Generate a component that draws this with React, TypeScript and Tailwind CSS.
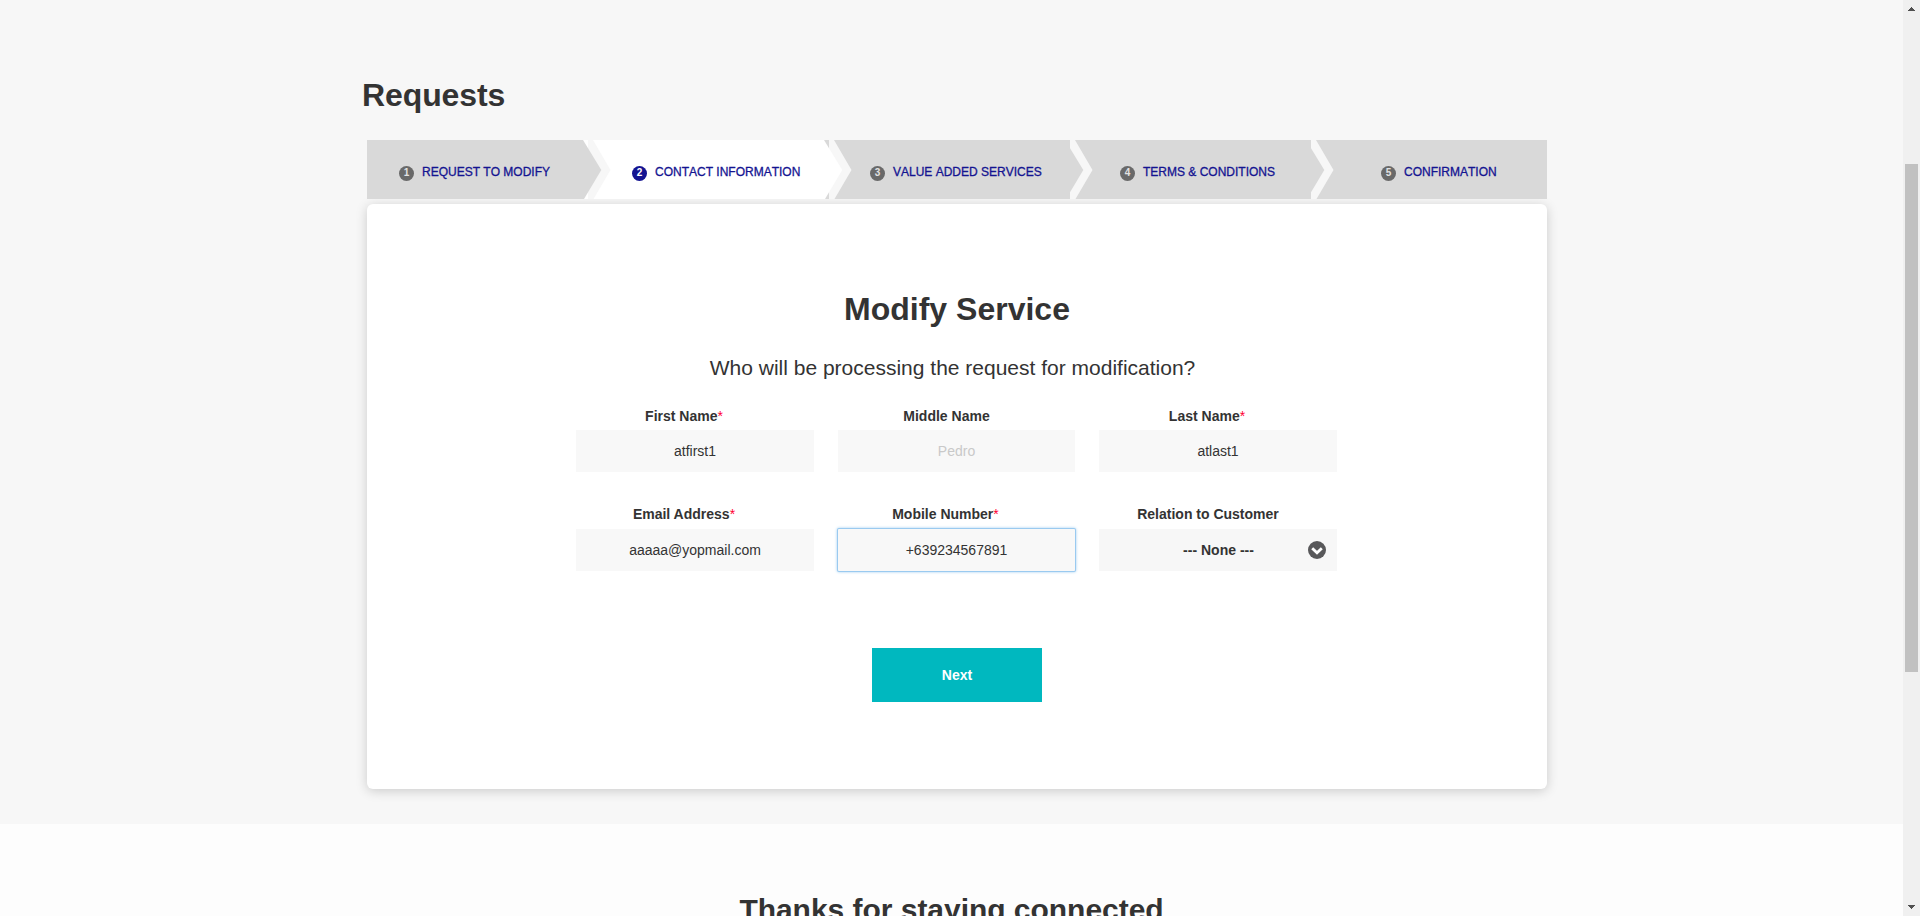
import React from "react";

type Step = { label: string; box: string; divider?: { own: string; prev: string }; active?: boolean };

const GRAY = "#d9d9d9";
const steps: Step[] = [
  { label: "REQUEST TO MODIFY", box: "w-[221px] pl-8" },
  { label: "CONTACT INFORMATION", box: "w-[241px] pl-11", divider: { own: "#ffffff", prev: GRAY }, active: true },
  { label: "VALUE ADDED SERVICES", box: "w-[241px] pl-[41px]", divider: { own: GRAY, prev: "#ffffff" } },
  { label: "TERMS & CONDITIONS", box: "w-[241px] pl-[50px]", divider: { own: GRAY, prev: GRAY } },
  { label: "CONFIRMATION", box: "w-[236px] pl-[70px]", divider: { own: GRAY, prev: GRAY } },
];

function Divider({ own, prev }: { own: string; prev: string }) {
  return (
    <svg className="absolute top-0 -left-[5px]" width="28" height="59" viewBox="0 0 28 59">
      <rect width="5" height="59" fill={own} />
      <polygon points="5,0 10,0 27.5,30 10.5,59 5,59" fill="#f7f7f7" />
      <polygon points="0,0 18.3,30 1,59 0,59" fill={prev} />
    </svg>
  );
}

function Stepper() {
  return (
    <ol className="flex h-[59px]">
      {steps.map((s, i) => (
        <li key={s.label} className={`relative flex shrink-0 ${s.active ? "bg-white" : "bg-[#d9d9d9]"} ${s.box}`}>
          {s.divider && <Divider {...s.divider} />}
          <span
            className={`relative mt-[26px] size-[15px] shrink-0 rounded-full text-center text-[10px] leading-[14px] font-bold ${s.active ? "bg-[#141491] text-white" : "bg-[#696969] text-[#e2e2e2]"}`}
          >
            {i + 1}
          </span>
          <span className="relative mt-6 ml-2 text-[12px] leading-4 whitespace-nowrap text-[#141491] [-webkit-text-stroke:0.3px_#141491] [font-kerning:none]">
            {s.label}
          </span>
        </li>
      ))}
    </ol>
  );
}

type FieldProps = { label: string; required?: boolean; tall?: boolean; children: React.ReactNode };

function Field({ label, required, tall, children }: FieldProps) {
  return (
    <div>
      <label
        className={`block text-center text-sm leading-[18px] font-bold ${required ? "pr-[22px]" : "pr-5"} ${tall ? "h-6" : "h-[23px]"}`}
      >
        {label}
        {required && <span className="font-normal text-[#ff0033]">*</span>}
      </label>
      {children}
    </div>
  );
}

function Input({ value, placeholder, focused }: { value?: string; placeholder?: string; focused?: boolean }) {
  return (
    <input
      readOnly
      defaultValue={value}
      placeholder={placeholder}
      className={`block h-[42px] w-full bg-[#f8f8f8] text-center text-sm text-[#333] outline-none placeholder:text-[#c9c9c9] ${focused ? "rounded-[1px] shadow-[0_0_0_1px_#9acaf0,0_0_3px_1px_#9fcdf0]" : ""}`}
    />
  );
}

function ArrowDownIcon() {
  return (
    <svg className="absolute top-3 right-[11px]" width="18" height="18" viewBox="0 0 18 18">
      <circle cx="9" cy="9" r="9" fill="#58585a" />
      <path d="M4.2 7.2 9 11.8l4.8-4.6" fill="none" stroke="#fff" strokeWidth="2.8" />
    </svg>
  );
}

function Scrollbar() {
  return (
    <div className="flex w-[17px] shrink-0 flex-col items-center bg-[#f0f0f0]">
      <svg className="mt-[7px] shrink-0" width="7" height="4" viewBox="0 0 7 4" shapeRendering="crispEdges">
        <path d="M3 0h1v1h1v1h1v1h1v1H0V3h1V2h1V1h1z" fill="#505050" />
      </svg>
      <div className="mt-[153px] h-[508px] w-[13px] shrink-0 bg-[#c1c1c1]" />
      <svg className="mt-[233px] shrink-0" width="7" height="4" viewBox="0 0 7 4" shapeRendering="crispEdges">
        <path d="M0 0h7v1H6v1H5v1H4v1H3V3H2V2H1V1H0z" fill="#505050" />
      </svg>
    </div>
  );
}

export default function App() {
  return (
    <div className="flex h-[916px] w-[1920px] overflow-hidden bg-[#fdfdfd] font-['Liberation_Sans',Arial,sans-serif] text-[#333]">
      <main className="w-[1903px] overflow-hidden">
        <section className="h-[824px] bg-[#f7f7f7] pt-[76px] pl-[361px]">
          <h1 className="ml-px h-16 text-[32px] leading-[38px] font-bold tracking-[-0.1px]">Requests</h1>
          <div className="ml-1.5 w-[1180px]">
            <Stepper />
            <div className="mt-[5px] flex h-[585px] flex-col items-center rounded-md bg-white pt-[86px] shadow-[0_2px_12px_rgba(0,0,0,0.18)]">
              <h2 className="text-[32px] leading-[38px] font-bold">Modify Service</h2>
              <p className="mt-[27px] pr-[9px] text-[21px] leading-[26px]">Who will be processing the request for modification?</p>
              <form className="mt-[26px] mr-px grid w-[761px] grid-cols-[238px_237px_238px] gap-x-6 gap-y-[33px]">
                <Field label="First Name" required>
                  <Input value="atfirst1" />
                </Field>
                <Field label="Middle Name">
                  <Input placeholder="Pedro" />
                </Field>
                <Field label="Last Name" required>
                  <Input value="atlast1" />
                </Field>
                <Field label="Email Address" required tall>
                  <Input value="aaaaa@yopmail.com" />
                </Field>
                <Field label="Mobile Number" required tall>
                  <Input value="+639234567891" focused />
                </Field>
                <Field label="Relation to Customer" tall>
                  <div className="relative h-[42px] bg-[#f7f7f7] pl-px text-center text-sm leading-[42px] font-bold">
                    --- None ---
                    <ArrowDownIcon />
                  </div>
                </Field>
              </form>
              <button className="mt-[77px] h-[54px] w-[170px] bg-[#00b8bf] text-sm font-bold text-white">Next</button>
            </div>
          </div>
        </section>
        <section className="pt-[66px] text-center">
          <h2 className="text-[30px] leading-[40px] font-bold tracking-[-0.03px]">Thanks for staying connected</h2>
        </section>
      </main>
      <Scrollbar />
    </div>
  );
}
